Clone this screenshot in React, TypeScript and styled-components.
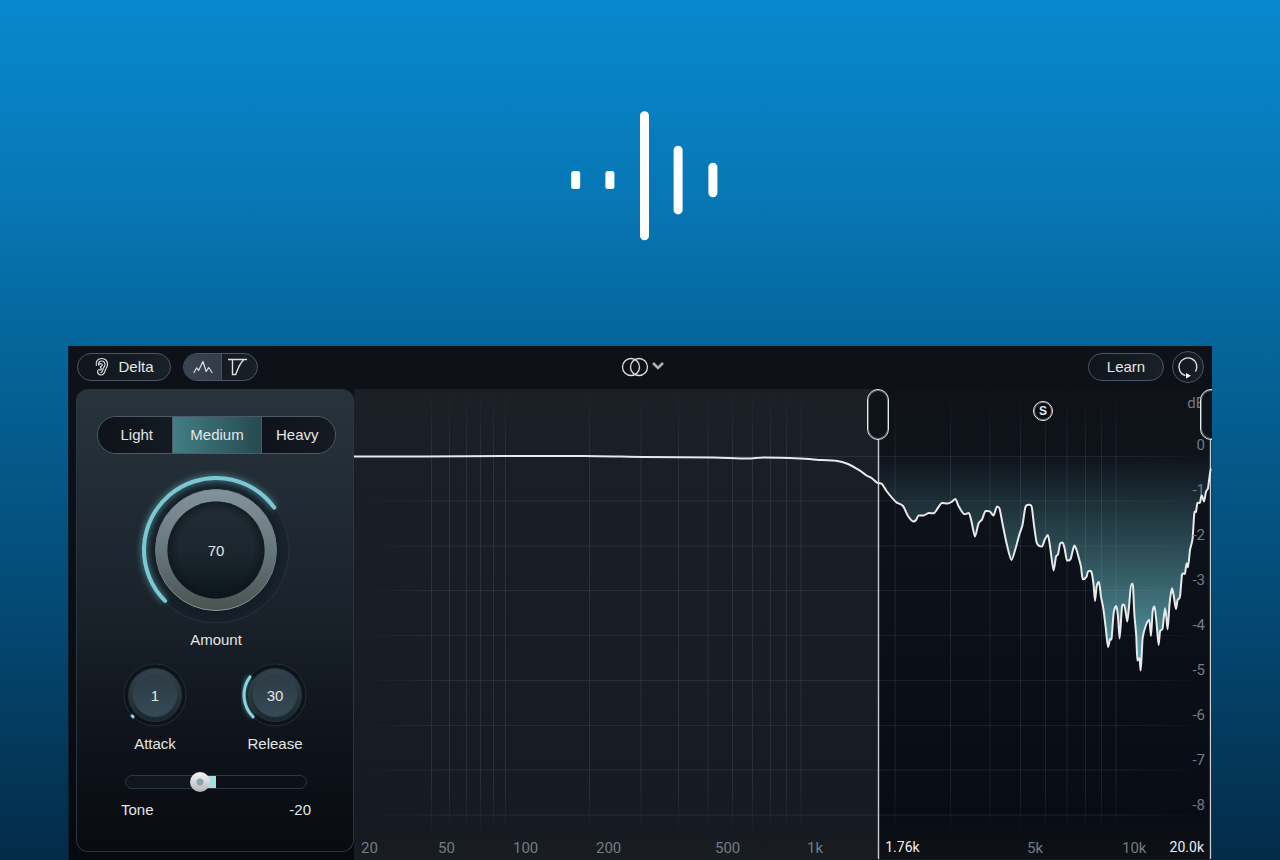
import React, { useState } from "react";
import styled, { createGlobalStyle, css } from "styled-components";

const GlobalStyle = createGlobalStyle`
  *, *::before, *::after { box-sizing: border-box; }
  body { margin: 0; background: #042b48; }
  button, input { font: inherit; color: inherit; margin: 0; }
`;

const Page = styled.main`
  min-height: 100vh;
  display: flex;
  flex-direction: column;
  background: linear-gradient(180deg, #0888ce 0%, #0777b5 23%, #05659a 40%, #044a75 70%, #042b48 100%);
  color: #e3e5e7;
  font: 15px/18px "Liberation Sans", Arial, sans-serif;
`;

const Hero = styled.header`
  display: flex;
  justify-content: center;
  padding: 110px 0 105px;
`;

const LogoMark = styled.svg`
  display: block;
  width: 160px;
  height: 131px;
`;

const Plugin = styled.section`
  margin: 0 68px;
  background: linear-gradient(180deg, #0e1218, #0c1016 40%, #060a10);
  border: solid #0b1d2c;
  border-width: 0 0 0 1px;
  overflow: hidden;
`;

const Toolbar = styled.div`
  display: grid;
  grid-template-columns: 1fr auto 1fr;
  align-items: center;
  height: 43px;
  padding: 0 8px 1px;
`;

const ToolGroup = styled.div<{ $end?: boolean }>`
  display: flex;
  align-items: center;
  gap: ${(p) => (p.$end ? 8 : 12)}px;
  justify-content: ${(p) => (p.$end ? "flex-end" : "flex-start")};
`;

const outlined = css`
  border: 1px solid #495667;
  background: linear-gradient(90deg, #10151c, #182028);
`;

const PillButton = styled.button<{ $width: number }>`
  ${outlined}
  width: ${(p) => p.$width}px;
  height: 28px;
  padding: 0;
  border-radius: 14px;
  display: flex;
  align-items: center;
  justify-content: center;
  gap: 8px;
`;

const RoundButton = styled.button`
  ${outlined}
  width: 32px;
  height: 32px;
  padding: 0;
  border-radius: 50%;
  display: grid;
  place-items: center;
`;

const ViewSwitch = styled.div`
  ${outlined}
  display: flex;
  height: 28px;
  border-radius: 14px;
  overflow: hidden;
`;

const ViewButton = styled.button<{ $active: boolean }>`
  width: 37px;
  padding: 0;
  border: 0;
  display: grid;
  place-items: center;
  background: ${(p) => (p.$active ? "linear-gradient(90deg, #3b4352, #343b49)" : "transparent")};
  & + & { border-left: 1px solid #46515f; padding-right: 4px; width: 36px; }
`;

const PlainButton = styled.button`
  display: flex;
  align-items: center;
  gap: 4px;
  padding: 0 0 0 4px;
  border: 0;
  background: none;
`;

const Icon = styled.svg`
  display: block;
  fill: none;
  stroke: #dcdfe2;
  overflow: visible;
`;

const Workspace = styled.div`
  display: grid;
  grid-template-columns: 278px 1fr;
  padding-left: 7px;
`;

const Panel = styled.form`
  display: flex;
  flex-direction: column;
  align-items: center;
  margin-bottom: 8px;
  padding: 26px 0 31px 2px;
  border: 1px solid #2a3642;
  border-top-color: #28333c;
  border-radius: 12px;
  background: linear-gradient(180deg, #28333b 0%, #222c34 20%, #1a232b 46%, #121820 66%, #0c1017 84%, #080c11 100%);
`;

const Segmented = styled.div`
  display: flex;
  width: 239px;
  height: 38px;
  margin-bottom: 16px;
  border: 1px solid #4d5a68;
  border-radius: 19px;
  overflow: hidden;
`;

const Segment = styled.button<{ $active: boolean }>`
  flex: ${(p) => (p.$active ? "0 0 89px" : "1 1 0")};
  padding: 0;
  border: 0;
  background: ${(p) =>
    p.$active ? "linear-gradient(90deg, #427e84, #264a50)" : "linear-gradient(90deg, #0e1219, #151b23)"};
  &:first-child { padding-left: 4px; }
  & + & { border-left: 1px solid #4d5a68; }
  &:last-child { padding-right: 2px; }
`;

const KnobField = styled.label<{ $gap: number; $width: number }>`
  display: flex;
  flex-direction: column;
  align-items: center;
  gap: ${(p) => p.$gap}px;
  width: ${(p) => p.$width}px;
`;

const KnobFace = styled.span<{ $size: number }>`
  display: grid;
  place-items: center;
  width: ${(p) => p.$size}px;
  height: ${(p) => p.$size}px;
  & > * { grid-area: 1 / 1; }
`;

const KnobValue = styled.span`
  padding-top: 2px;
`;

const KnobInput = styled.input`
  width: 100%;
  height: 100%;
  opacity: 0;
  cursor: pointer;
`;

const KnobRow = styled.div`
  display: flex;
  margin: 12px 2px 19px 0;
`;

const tonePosition = (value: number) => (value + 100) / 2;

const ToneSlider = styled.input.attrs({ type: "range" })<{ $value: number }>`
  appearance: none;
  width: 182px;
  height: 20px;
  background: none;
  &::-webkit-slider-runnable-track {
    height: 14px;
    border: 1px solid #2b3743;
    border-radius: 7px;
    background: linear-gradient(
      90deg,
      #10161d ${(p) => tonePosition(p.$value)}%,
      #a5dde3 ${(p) => tonePosition(p.$value)}% 50%,
      #0d1117 50%
    );
  }
  &::-webkit-slider-thumb {
    appearance: none;
    width: 20px;
    height: 20px;
    margin-top: -4px;
    border-radius: 50%;
    background:
      radial-gradient(circle, #86a9ad 3px, transparent 4px),
      linear-gradient(180deg, #f6f6f7, #b4b6bd);
  }
`;

const ToneLegend = styled.div`
  display: flex;
  justify-content: space-between;
  width: 190px;
  margin-top: 9px;
`;

const Chart = styled.div`
  position: relative;
  height: 471px;
  overflow: hidden;
  border-bottom: 1px solid #171c22;
  font: 15px/18px Roboto, sans-serif;
  color: #717c86;
`;

const Plot = styled.svg`
  display: block;
  width: 100%;
  height: 470px;
`;

const FreqLabel = styled.span`
  position: absolute;
  bottom: 2px;
`;

const Readout = styled.output<{ $end?: boolean }>`
  position: absolute;
  bottom: 3px;
  ${(p) => (p.$end ? "right: 8px;" : "left: calc(61.1% + 7px);")}
  font-size: 14px;
  color: #eceef0;
`;

const GainScale = styled.div`
  position: absolute;
  top: 5px;
  right: 7px;
  text-align: right;
`;

const GainLabel = styled.div`
  height: 45px;
`;

const GainUnit = styled.div`
  height: 42px;
`;

const BandHandle = styled.button<{ $at: string }>`
  position: absolute;
  top: 0;
  left: ${(p) => p.$at};
  width: 22px;
  height: 51px;
  margin-left: -11px;
  padding: 0;
  border: 1px solid #e6e8ea;
  border-radius: 11px;
  background: #0e1219;
  box-shadow: inset 0 0 0 1px rgba(230, 232, 234, 0.4);
`;

const SoloButton = styled.button`
  position: absolute;
  top: 12px;
  left: calc(80.3% - 10px);
  width: 20px;
  height: 20px;
  padding: 0;
  border: 1px solid #f0f1f2;
  border-radius: 50%;
  background: #0b0f15;
  box-shadow: inset 0 0 0 1px rgba(240, 241, 242, 0.4);
  color: #e6e8ea;
  font: bold 12px/18px "Liberation Sans", Arial, sans-serif;
`;

const VERTICALS = [
  77.5, 95.5, 112.5, 126.5, 139.5, 151.5, 235.5, 287, 324.5, 354, 378.5, 398.5, 416.5, 432.5, 447, 541, 596.5, 636,
  666.5, 691.5, 713, 731.5, 747.5, 762,
];
const HORIZONTALS = [67.5, 112, 157, 201.5, 246.5, 291.5, 336.5, 381, 426];

const FREQUENCIES: [string, number][] = [
  ["20", 7], ["50", 84], ["100", 159], ["200", 242], ["500", 361], ["1k", 453], ["5k", 673], ["10k", 768],
];
const GAINS = ["0", "-1", "-2", "-3", "-4", "-5", "-6", "-7", "-8"];

const CURVE: [number, number][] = [
  [0, 67.5], [70, 67.5], [150, 67], [230, 67], [290, 68], [360, 68.5], [394, 69.5], [410, 68.5], [446, 69.5],
  [468, 71], [482, 71.7], [494, 75], [506, 81.7], [512.5, 86.5], [517.5, 89], [523.5, 94], [528, 95], [532.5, 102],
  [542, 113], [549, 117], [554, 127], [559.5, 132.5], [562, 131], [564.5, 126.5], [569.5, 126.5], [575, 124],
  [579.5, 124.3], [588, 114], [593.5, 114.5], [597.5, 113], [601.5, 110], [604.5, 117], [610.5, 125.3], [615, 124],
  [617.5, 132.5], [621, 147.5], [624.5, 134.5], [628, 130.5], [631.5, 122], [636, 122.5], [639.5, 126.5],
  [643, 117.5], [645.5, 119.5], [648.5, 134.5], [652.5, 154], [657.5, 171], [662, 158], [665.5, 145], [668.5, 136],
  [671.3, 118.5], [674.5, 115.8], [677.7, 117.7], [680, 136], [682.7, 153.6], [688, 157.6], [690.6, 151],
  [694, 146], [696.3, 159.3], [699.6, 181.5], [702, 167.6], [704, 165.3], [706, 155], [708.6, 153.6],
  [710.6, 159.3], [713, 171.6], [716.6, 170], [720.3, 156.6], [722.6, 161], [724.6, 168.3], [727, 177.6],
  [728.6, 190.3], [732.6, 187.6], [734, 182.3], [737.5, 183], [739.6, 196], [741, 212], [742.6, 197.6], [745, 193],
  [747, 207.6], [749.3, 219.3], [751.6, 237.6], [754, 258], [756, 250.3], [757.6, 249.3], [759.6, 224.3],
  [762.3, 217], [764, 227.6], [765.6, 249.6], [768, 218], [770.3, 216], [771.6, 222.6], [773.3, 232.6],
  [775.3, 214.3], [777, 196], [779, 197], [780.3, 224.3], [782.3, 247.6], [783.3, 271.6], [785.6, 269.3],
  [786.6, 281.6], [787.6, 267.6], [788.6, 249.3], [792, 236], [795.3, 231], [797, 247], [798.6, 222.6],
  [800.6, 217.6], [802.6, 234.3], [804.6, 256], [806, 242.6], [808.6, 239.3], [811, 219.3], [812.3, 227.6],
  [813.6, 240.3], [815.6, 214.3], [818, 199.3], [819.6, 206], [822, 220], [823.6, 211], [826, 207.6],
  [828, 186], [831, 184.3], [832.6, 174.3], [834, 178.3], [836, 161], [838.6, 149.3], [840.3, 124.3],
  [842, 122.6], [843.3, 114.3], [846, 113.6], [847.6, 106], [850, 112.6], [852, 102.6], [854, 99.3], [855.3, 89.3],
  [857, 79],
];

/* Joins the points with short beziers whose tangents follow the neighbouring points. */
function smoothPath(points: [number, number][]) {
  let d = `M${points[0][0]} ${points[0][1]}`;
  for (let i = 0; i < points.length - 1; i++) {
    const a = points[Math.max(i - 1, 0)];
    const b = points[i];
    const c = points[i + 1];
    const e = points[Math.min(i + 2, points.length - 1)];
    const slope = (p: number[], q: number[], r: number[]) =>
      (q[1] - p[1]) * (r[1] - q[1]) <= 0 ? 0 : (r[1] - p[1]) / (r[0] - p[0] || 1);
    const s1 = slope(a, b, c);
    const s2 = slope(b, c, e);
    const k = (c[0] - b[0]) / 4;
    d += `C${b[0] + k} ${b[1] + s1 * k} ${c[0] - k} ${c[1] - s2 * k} ${c[0]} ${c[1]}`;
  }
  return d;
}

const curvePath = smoothPath(CURVE);
const bandPath = `${smoothPath(CURVE.filter(([x]) => x >= 523))}V67H523.5Z`;

function polar(c: number, r: number, deg: number) {
  const a = (deg * Math.PI) / 180;
  return `${c + r * Math.sin(a)} ${c - r * Math.cos(a)}`;
}

function arc(c: number, r: number, value: number) {
  const end = -135 + value * 2.7;
  return `M${polar(c, r, -135)}A${r} ${r} 0 ${value > 67 ? 1 : 0} 1 ${polar(c, r, end)}`;
}

type KnobProps = { label: string; initial: number };

function LargeKnob({ label, initial }: KnobProps) {
  const [value, setValue] = useState(initial);
  return (
    <KnobField $gap={1} $width={160}>
      <KnobFace $size={160}>
        <svg width="160" height="160" viewBox="0 0 160 160" aria-hidden="true">
          <defs>
            <linearGradient id="rim" x1="0" y1="0" x2="0" y2="1">
              <stop offset="0" stopColor="#82939b" />
              <stop offset="0.5" stopColor="#68777d" />
              <stop offset="1" stopColor="#485250" />
            </linearGradient>
            <linearGradient id="rimEdge" x1="0" y1="0" x2="0" y2="1">
              <stop offset="0" stopColor="#74848b" />
              <stop offset="0.6" stopColor="#66757b" />
              <stop offset="1" stopColor="#82979d" />
            </linearGradient>
            <linearGradient id="well" x1="0" y1="0" x2="0" y2="1">
              <stop offset="0" stopColor="#222e36" />
              <stop offset="0.5" stopColor="#1b262e" />
              <stop offset="1" stopColor="#0d171d" />
            </linearGradient>
            <radialGradient id="wellShade">
              <stop offset="0.78" stopColor="#0b1218" stopOpacity="0" />
              <stop offset="1" stopColor="#0b1218" stopOpacity="0.6" />
            </radialGradient>
            <filter id="glow" x="-20%" y="-20%" width="140%" height="140%">
              <feGaussianBlur stdDeviation="3" />
            </filter>
          </defs>
          <circle cx="80" cy="80" r="73" fill="#18202a" fillOpacity="0.55" stroke="#263440" />
          <circle cx="80" cy="81" r="63" fill="#10171e" opacity="0.6" filter="url(#glow)" />
          <path d={arc(80, 72, value)} fill="none" stroke="#5fb4c0" strokeWidth="6" opacity="0.6" filter="url(#glow)" />
          <path d={arc(80, 72, value)} fill="none" stroke="#7bc8d2" strokeWidth="4" strokeLinecap="round" />
          <circle cx="80" cy="80" r="60.5" fill="url(#rim)" stroke="url(#rimEdge)" />
          <circle cx="80" cy="80" r="48.5" fill="url(#well)" />
          <circle cx="80" cy="80" r="48.5" fill="url(#wellShade)" />
        </svg>
        <KnobValue>{value}</KnobValue>
        <KnobInput type="range" min={0} max={100} value={value} onChange={(e) => setValue(+e.target.value)} />
      </KnobFace>
      {label}
    </KnobField>
  );
}

function SmallKnob({ label, initial }: KnobProps) {
  const [value, setValue] = useState(initial);
  return (
    <KnobField $gap={6} $width={120}>
      <KnobFace $size={68}>
        <svg width="68" height="68" viewBox="0 0 68 68" aria-hidden="true">
          <defs>
            <linearGradient id="cap" x1="0" y1="0" x2="0" y2="1">
              <stop offset="0" stopColor="#2c3b44" />
              <stop offset="1" stopColor="#364956" />
            </linearGradient>
            <linearGradient id="collar" x1="0" y1="0" x2="0" y2="1">
              <stop offset="0" stopColor="#33434b" />
              <stop offset="1" stopColor="#1b272e" />
            </linearGradient>
            <filter id="softGlow" x="-80%" y="-80%" width="260%" height="260%">
              <feGaussianBlur stdDeviation="2" />
            </filter>
          </defs>
          <circle cx="34" cy="34" r="31" fill="#0e1319" stroke="#232e38" />
          <circle cx="34" cy="34" r="26.5" fill="url(#collar)" stroke="#25343a" />
          <circle cx="34" cy="34" r="21.5" fill="url(#cap)" stroke="#344650" />
          <path d={arc(34, 31, value)} fill="none" stroke="#5fb4c0" strokeWidth="4" opacity="0.6" filter="url(#softGlow)" />
          <path d={arc(34, 31, value)} fill="none" stroke="#8bd3da" strokeWidth="3" strokeLinecap="round" />
        </svg>
        <KnobValue>{value}</KnobValue>
        <KnobInput type="range" min={0} max={100} value={value} onChange={(e) => setValue(+e.target.value)} />
      </KnobFace>
      {label}
    </KnobField>
  );
}

function ResponseChart() {
  return (
    <Chart>
      <Plot viewBox="0 0 858 470" preserveAspectRatio="none" role="img" aria-label="Frequency response">
        <defs>
          <linearGradient id="muted" x1="0" y1="0" x2="0" y2="1">
            <stop offset="0" stopColor="#1c2026" />
            <stop offset="0.15" stopColor="#1a1e26" />
            <stop offset="0.93" stopColor="#161a22" />
            <stop offset="1" stopColor="#191d20" />
          </linearGradient>
          <linearGradient id="active" x1="0" y1="0" x2="0" y2="1">
            <stop offset="0" stopColor="#0f1318" />
            <stop offset="0.15" stopColor="#0e121a" />
            <stop offset="0.9" stopColor="#080c15" />
            <stop offset="1" stopColor="#0e1114" />
          </linearGradient>
          <linearGradient id="band" gradientUnits="userSpaceOnUse" x1="0" y1="67" x2="0" y2="282">
            <stop offset="0" stopColor="#6fc9d2" stopOpacity="0.01" />
            <stop offset="0.2" stopColor="#6fc9d2" stopOpacity="0.15" />
            <stop offset="0.5" stopColor="#6fc9d2" stopOpacity="0.37" />
            <stop offset="0.8" stopColor="#6fc9d2" stopOpacity="0.62" />
            <stop offset="1" stopColor="#78d3dc" stopOpacity="0.85" />
          </linearGradient>
          <linearGradient id="fadeY" x1="0" y1="0" x2="0" y2="1">
            <stop offset="0" stopColor="#fff" stopOpacity="0" />
            <stop offset="0.15" stopColor="#fff" />
            <stop offset="0.84" stopColor="#fff" />
            <stop offset="0.96" stopColor="#fff" stopOpacity="0" />
          </linearGradient>
          <linearGradient id="fadeX">
            <stop offset="0" stopColor="#fff" stopOpacity="0" />
            <stop offset="0.1" stopColor="#fff" />
            <stop offset="0.9" stopColor="#fff" />
            <stop offset="1" stopColor="#fff" stopOpacity="0" />
          </linearGradient>
          <mask id="maskY"><rect width="858" height="470" fill="url(#fadeY)" /></mask>
          <mask id="maskX"><rect width="858" height="470" fill="url(#fadeX)" /></mask>
        </defs>
        <rect width="524" height="470" fill="url(#muted)" />
        <rect x="524" width="334" height="470" fill="url(#active)" />
        <path d={bandPath} fill="url(#band)" />
        <g stroke="#8fb4c4" strokeOpacity="0.14">
          <g mask="url(#maskY)">
            {VERTICALS.map((x) => <path key={x} d={`M${x} 0V470`} vectorEffect="non-scaling-stroke" />)}
          </g>
          <g mask="url(#maskX)" strokeOpacity="0.12">
            {HORIZONTALS.map((y) => <path key={y} d={`M0 ${y}H858`} vectorEffect="non-scaling-stroke" />)}
          </g>
        </g>
        <path d="M524.5 50V470M856.5 50V470" stroke="#c9cccf" strokeWidth="1.4" vectorEffect="non-scaling-stroke" />
        <path
          d={curvePath}
          fill="none"
          stroke="#e8e9ea"
          strokeWidth="2"
          strokeLinejoin="round"
          vectorEffect="non-scaling-stroke"
        />
      </Plot>
      {FREQUENCIES.map(([text, x]) => (
        <FreqLabel key={text} style={{ left: `${(x / 858) * 100}%` }}>{text}</FreqLabel>
      ))}
      <Readout>1.76k</Readout>
      <Readout $end>20.0k</Readout>
      <GainScale>
        <GainUnit>dB</GainUnit>
        {GAINS.map((g) => <GainLabel key={g}>{g}</GainLabel>)}
      </GainScale>
      <BandHandle type="button" $at="61.1%" aria-label="Low band edge" />
      <BandHandle type="button" $at="calc(100% - 1px)" aria-label="High band edge" />
      <SoloButton type="button">S</SoloButton>
    </Chart>
  );
}

const MODES = ["Light", "Medium", "Heavy"];

export default function App() {
  const [mode, setMode] = useState("Medium");
  const [view, setView] = useState(0);
  const [tone, setTone] = useState(-20);
  return (
    <>
      <GlobalStyle />
      <Page>
        <Hero>
          <LogoMark viewBox="0 0 160 131" fill="#fff" role="img" aria-label="Sound wave logo">
            <rect x="11.2" y="61" width="9" height="18" rx="2.5" />
            <rect x="45.4" y="61" width="9" height="18" rx="2.5" />
            <rect x="80" y="1.2" width="9" height="129" rx="4.5" />
            <rect x="113.6" y="35.8" width="9" height="68.6" rx="4.5" />
            <rect x="148.4" y="52.8" width="9" height="34.4" rx="4.5" />
          </LogoMark>
        </Hero>
        <Plugin>
          <Toolbar>
            <ToolGroup>
              <PillButton type="button" $width={94}>
                <Icon width="16" height="20" viewBox="0 0 16 20" strokeWidth="1.2" strokeLinecap="round">
                  <path d="M2.3 8.300C1.400 4.200 4 1.500 7.800 1.500c3.700 0 6 2.600 5.700 6.200-.2 2.400-1.600 3.500-2.200 5.500-.7 2.700-1.500 4.800-4.200 4.800-2.700 0-3.800-2-3.400-4.500" />
                  <path d="M4.600 8.200C4.100 5.700 5.500 4 7.700 4c2.200 0 3.500 1.600 3.300 3.700-.2 1.900-1.600 2.600-2 4.400-.4 1.900-.7 3.200-2.100 3.200" />
                  <path d="M4.900 7.300c1.200-1.200 3.400-.6 3.400.8 0 1.200-1.700 1-1.900 1.800-.2.8 1 .9.900 2-.1 1-1.500 1.400-2.600.6" />
                </Icon>
                Delta
              </PillButton>
              <ViewSwitch role="group" aria-label="Display">
                <ViewButton type="button" $active={view === 0} aria-label="Spectrum" onClick={() => setView(0)}>
                  <Icon width="20" height="14" viewBox="0 0 20 14" strokeWidth="1.2" strokeLinejoin="round" strokeLinecap="round">
                    <path d="M1 12.500l2.700-4.700 1.900 2.700L10 1.500l3.200 10 2.500-4 3.300 5" />
                  </Icon>
                </ViewButton>
                <ViewButton type="button" $active={view === 1} aria-label="Curve" onClick={() => setView(1)}>
                  <Icon width="20" height="18" viewBox="0 0 20 18" strokeWidth="1.4">
                    <path d="M0 1.500h19M4.500 1.500v15h3.200C10.500 10 11 6 16 1.500" />
                  </Icon>
                </ViewButton>
              </ViewSwitch>
            </ToolGroup>
            <PlainButton type="button" aria-label="Channel mode">
              <Icon width="26" height="20" viewBox="0 0 26 20" strokeWidth="1.3">
                <circle cx="9" cy="10" r="8.500" />
                <circle cx="17" cy="10" r="8.500" />
              </Icon>
              <Icon width="12" height="10" viewBox="0 0 12 10" strokeWidth="2.5">
                <path d="M1 1l5 5 5-5" stroke="#aeb3b8" />
              </Icon>
            </PlainButton>
            <ToolGroup $end>
              <PillButton type="button" $width={76}>Learn</PillButton>
              <RoundButton type="button" aria-label="Reset">
                <Icon width="22" height="22" viewBox="0 0 22 22" strokeWidth="1.4">
                  <path d="M18.500 15.700A9 9 0 1 0 8.500 19.600" />
                  <path d="M9 17v5.500l5-2.700z" fill="#fff" stroke="none" />
                </Icon>
              </RoundButton>
            </ToolGroup>
          </Toolbar>
          <Workspace>
            <Panel>
              <Segmented role="group" aria-label="Mode">
                {MODES.map((m) => (
                  <Segment key={m} type="button" $active={m === mode} aria-pressed={m === mode} onClick={() => setMode(m)}>
                    {m}
                  </Segment>
                ))}
              </Segmented>
              <LargeKnob label="Amount" initial={70} />
              <KnobRow>
                <SmallKnob label="Attack" initial={1} />
                <SmallKnob label="Release" initial={30} />
              </KnobRow>
              <ToneSlider id="tone" min={-100} max={100} value={tone} $value={tone} onChange={(e) => setTone(+e.target.value)} />
              <ToneLegend>
                <label htmlFor="tone">Tone</label>
                <output htmlFor="tone">{tone}</output>
              </ToneLegend>
            </Panel>
            <ResponseChart />
          </Workspace>
        </Plugin>
      </Page>
    </>
  );
}
